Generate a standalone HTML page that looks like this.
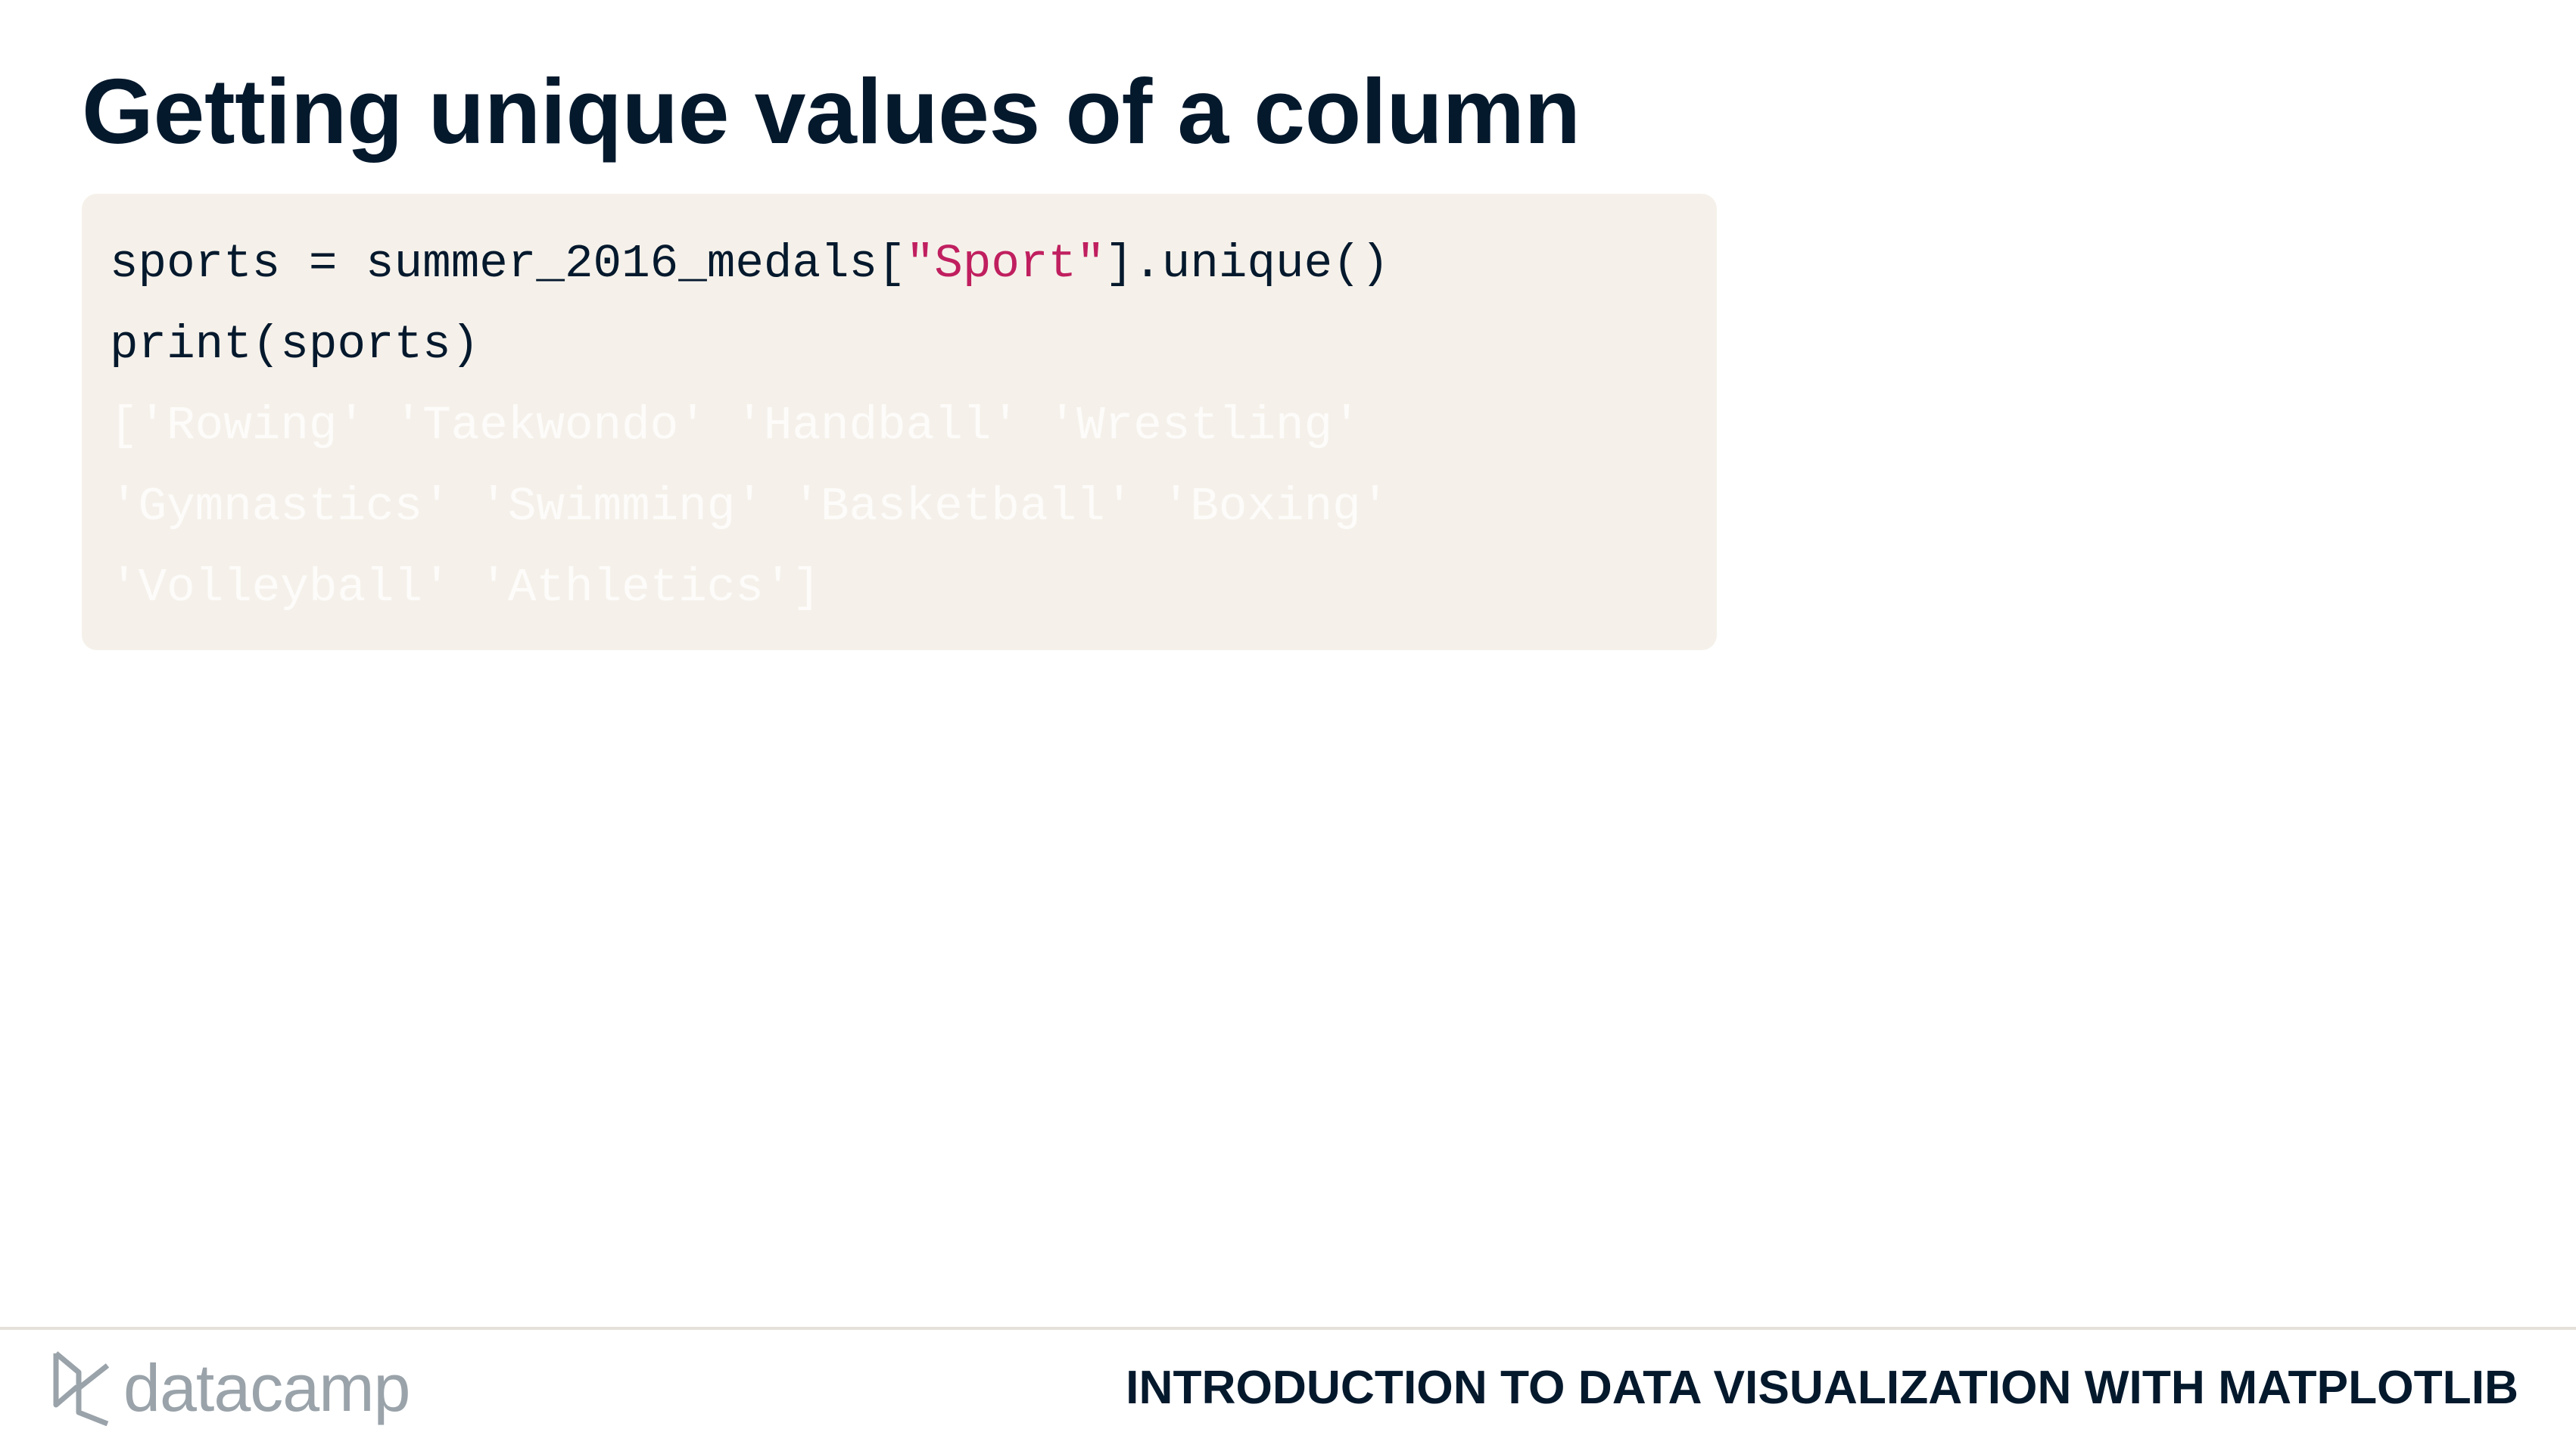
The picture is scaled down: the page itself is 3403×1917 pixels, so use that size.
<!DOCTYPE html>
<html><head><meta charset="utf-8"><style>
html,body{margin:0;padding:0;background:#fff;}
body{width:3403px;height:1917px;position:relative;overflow:hidden;}
h1{position:absolute;left:108px;top:86px;margin:0;font:bold 122px/1 "Liberation Sans",sans-serif;color:#05192d;letter-spacing:-0.4px;}
.box{position:absolute;left:108px;top:256px;width:2160px;height:603px;background:#f5f1ea;border-radius:20px;}
.code{position:absolute;left:145px;font:62.6px/1 "Liberation Mono",monospace;color:#05192d;white-space:pre;}
.s{color:#c01f5f}
.o{color:#fdfcfa}
.line{position:absolute;left:0;top:1753px;width:3403px;height:4px;background:#e5e1da;}
.ft{position:absolute;right:76px;top:1803px;font:bold 62.3px/1 "Liberation Sans",sans-serif;color:#05192d;white-space:nowrap;}
.dc{position:absolute;left:163px;top:1790px;font:88px/1 "Liberation Sans",sans-serif;color:#9aa3aa;letter-spacing:-1px;}
</style></head><body>
<h1>Getting unique values of a column</h1>
<div class="box"></div>
<div class="code" style="top:318px">sports = summer_2016_medals[<span class="s">"Sport"</span>].unique()</div>
<div class="code" style="top:425px">print(sports)</div>
<div class="code o" style="top:532px">['Rowing' 'Taekwondo' 'Handball' 'Wrestling'</div>
<div class="code o" style="top:639px">'Gymnastics' 'Swimming' 'Basketball' 'Boxing'</div>
<div class="code o" style="top:746px">'Volleyball' 'Athletics']</div>
<div class="line"></div>
<svg style="position:absolute;left:68px;top:1782px" width="80" height="102" viewBox="0 0 80 102">
<path d="M6 6 L6 74 L34 50 M6 6 L36 31 L36 84 L74 99 M36 52 L74 22" fill="none" stroke="#9aa3aa" stroke-width="7" stroke-linejoin="round"/>
</svg>
<div class="dc">datacamp</div>
<div class="ft">INTRODUCTION TO DATA VISUALIZATION WITH MATPLOTLIB</div>
</body></html>
